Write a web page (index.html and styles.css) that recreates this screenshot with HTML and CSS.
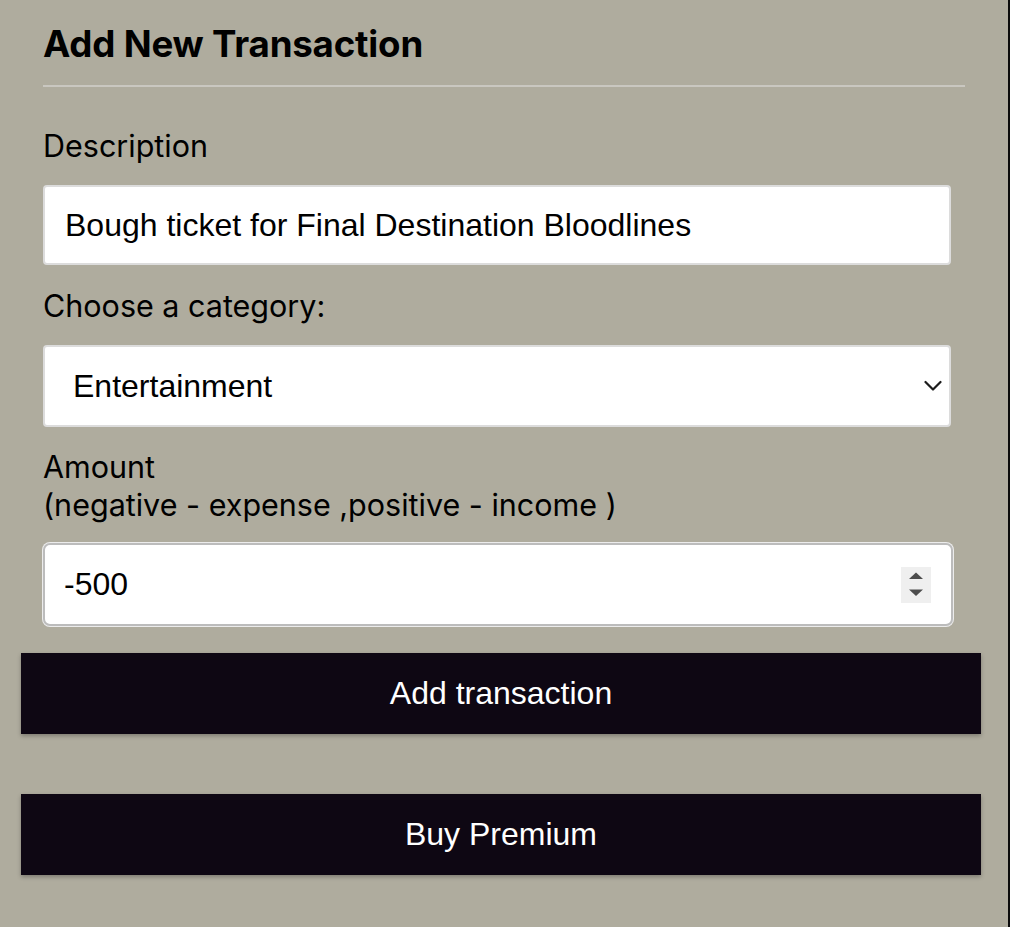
FILE: index.html
```html
<!DOCTYPE html>
<html lang="en">
<head>
<meta charset="utf-8">
<title>Add New Transaction</title>
<link rel="stylesheet" href="styles.css">
</head>
<body>
<div class="panel">
  <form class="tx-form" onsubmit="return false">
    <div class="form-head">
      <h2 class="title">Add New Transaction</h2>
      <hr class="divider">
    </div>

    <label class="label" for="desc">Description</label>
    <input class="field text-field" id="desc" type="text" value="Bough ticket for Final Destination Bloodlines">

    <label class="label label-cat" for="cat">Choose a category:</label>
    <div class="field select-box">
      <select class="select" id="cat">
        <option>Entertainment</option>
        <option>Food</option>
        <option>Transport</option>
        <option>Salary</option>
      </select>
      <svg class="chevron" width="18" height="12" viewBox="0 0 18 12" aria-hidden="true">
        <path d="M1.5 2 L9 9.5 L16.5 2" fill="none" stroke="#1c1c1c" stroke-width="2.2" stroke-linecap="round" stroke-linejoin="round"/>
      </svg>
    </div>

    <label class="label label-amount" for="amount">Amount<br>(negative - expense ,positive - income )</label>
    <div class="number-box">
      <input class="number-input" id="amount" type="text" value="-500">
      <span class="spinner" aria-hidden="true">
        <svg width="30" height="36" viewBox="0 0 30 36">
          <path d="M8 12 L15 5.5 L22 12 Z" fill="#4d4d4d"/>
          <path d="M8 22.5 L22 22.5 L15 29 Z" fill="#4d4d4d"/>
        </svg>
      </span>
    </div>

    <button class="btn btn-add" type="submit">Add transaction</button>
    <button class="btn btn-premium" type="button">Buy Premium</button>
  </form>
</div>
</body>
</html>
```

FILE: styles.css
```css
* {
  box-sizing: border-box;
}

html, body {
  margin: 0;
  padding: 0;
}

body {
  background: #afac9e;
  font-family: Inter, "Noto Sans", "Liberation Sans", sans-serif;
  color: #000;
}

.panel {
  width: 1010px;
  min-height: 927px;
  border-right: 2px solid #0b0b0b;
  padding: 20px 0 0 21px;
}

.tx-form {
  display: flex;
  flex-direction: column;
  align-items: flex-start;
}

.form-head {
  width: 922px;
  margin-left: 22px;
}

.title {
  margin: 0;
  font-size: 36.7px;
  line-height: 48px;
  font-weight: 700;
  letter-spacing: -0.2px;
}

.divider {
  margin: 17px 0 0 0;
  border: 0;
  height: 2px;
  background: #c9c7c0;
}

.label {
  display: block;
  margin: 41px 0 21px 22px;
  font-size: 30.5px;
  line-height: 36px;
}

.label-cat {
  margin-top: 23px;
}

.label-amount {
  margin-top: 21px;
  margin-bottom: 19px;
  line-height: 38px;
}

.field {
  width: 908px;
  height: 80px;
  margin-left: 22px;
  background: #fff;
  border: 2px solid #dcdcdc;
  border-radius: 4px;
}

.text-field {
  padding: 0 20px;
  font-family: "Liberation Sans", Arial, sans-serif;
  font-size: 32px;
  color: #000;
  outline: none;
}

.select-box {
  height: 82px;
  display: flex;
  align-items: center;
  padding: 0 7px 0 28px;
}

.select {
  flex: 1;
  appearance: none;
  -webkit-appearance: none;
  border: 0;
  background: transparent;
  font-family: "Liberation Sans", Arial, sans-serif;
  font-size: 32px;
  color: #000;
  padding: 0;
  outline: none;
}

.chevron {
  flex: none;
}

.number-box {
  width: 910px;
  height: 83px;
  margin-left: 22px;
  display: flex;
  align-items: center;
  padding: 0 20px 0 19px;
  background: #fff;
  border: 2px solid #bcbcbc;
  border-radius: 7px;
  box-shadow: 0 0 0 1px #ececec;
}

.number-input {
  flex: 1;
  border: 0;
  padding: 0;
  background: transparent;
  font-family: "Liberation Sans", Arial, sans-serif;
  font-size: 32px;
  color: #000;
  outline: none;
}

.spinner {
  flex: none;
  display: flex;
  width: 30px;
  height: 36px;
  background: #efefef;
}

.btn {
  width: 960px;
  height: 81px;
  border: 0;
  border-radius: 0;
  background: #0e0713;
  color: #fff;
  font-family: "Liberation Sans", Arial, sans-serif;
  font-size: 32px;
  box-shadow: 0 2px 4px rgba(0, 0, 0, 0.28);
  cursor: pointer;
}

.btn-add {
  margin-top: 27px;
}

.btn-premium {
  margin-top: 60px;
}
```
